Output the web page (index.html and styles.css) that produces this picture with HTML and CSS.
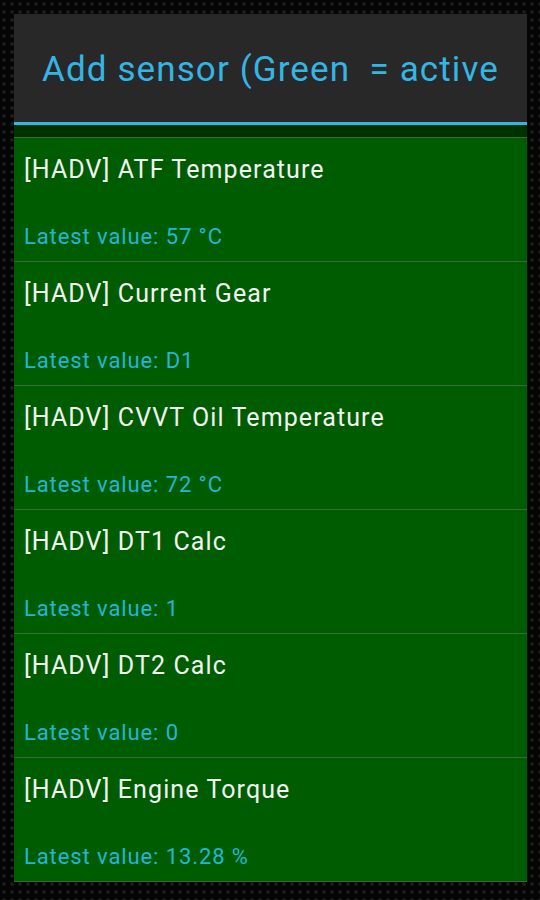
FILE: index.html
```html
<!DOCTYPE html>
<html>
    <head>
        <meta charset="utf-8">
        <meta name="viewport" content="width=device-width, initial-scale=1">
        <title>Add sensor</title>
        <link rel="stylesheet" href="styles.css">
    </head>
    <body>
        <div class="dialog">
            <div class="dialog-title">Add sensor (Green&nbsp; = active</div>
            <div class="title-rule"></div>
            <div class="band"></div>
            <ul class="sensors">
                <li class="sensor active">
                    <div class="sensor-name">[HADV] ATF Temperature</div>
                    <div class="sensor-value">Latest value: 57 °C</div>
                </li>
                <li class="sensor active">
                    <div class="sensor-name">[HADV] Current Gear</div>
                    <div class="sensor-value">Latest value: D1</div>
                </li>
                <li class="sensor active">
                    <div class="sensor-name">[HADV] CVVT Oil Temperature</div>
                    <div class="sensor-value">Latest value: 72 °C</div>
                </li>
                <li class="sensor active">
                    <div class="sensor-name">[HADV] DT1 Calc</div>
                    <div class="sensor-value">Latest value: 1</div>
                </li>
                <li class="sensor active">
                    <div class="sensor-name">[HADV] DT2 Calc</div>
                    <div class="sensor-value">Latest value: 0</div>
                </li>
                <li class="sensor active">
                    <div class="sensor-name">[HADV] Engine Torque</div>
                    <div class="sensor-value">Latest value: 13.28 %</div>
                </li>
            </ul>
        </div>
    </body>
</html>
```

FILE: styles.css
```css
html{
    height: 100%;
    background-color: #050505;
    background-image: radial-gradient(circle, #1c1c1c 1.5px, transparent 2px);
    background-size: 8px 8px;
}
body{
    margin: 0;
    padding: 14px 13px 0 14px;
    font-family: Roboto, "Liberation Sans", sans-serif;
    overflow: hidden;
}
.dialog{
    width: 513px;
    background-color: #282828;
}
.dialog-title{
    height: 108px;
    display: flex;
    align-items: center;
    justify-content: center;
    color: #33b5e5;
    font-size: 35px;
    letter-spacing: 1.1px;
    white-space: nowrap;
    overflow: hidden;
    padding-top: 2px;
    box-sizing: border-box;
}
.title-rule{
    height: 3px;
    background-color: #33b5e5;
}
.band{
    height: 12px;
    background-color: #003200;
}
.sensors{
    list-style: none;
    margin: 0;
    padding: 0;
    border-bottom: 1px solid #3b6a3b;
}
.sensor{
    border-top: 1px solid #3b6a3b;
    padding: 16px 10px 10px 10px;
    height: 97px;
}
.sensor.active{
    background-color: #005c00;
}
.sensor-name{
    color: #f2f2f2;
    font-size: 25px;
    letter-spacing: 1.1px;
    line-height: 32px;
}
.sensor-value{
    color: #22b5d9;
    font-size: 22px;
    letter-spacing: 0.9px;
    line-height: 28px;
    margin-top: 37px;
}
```
